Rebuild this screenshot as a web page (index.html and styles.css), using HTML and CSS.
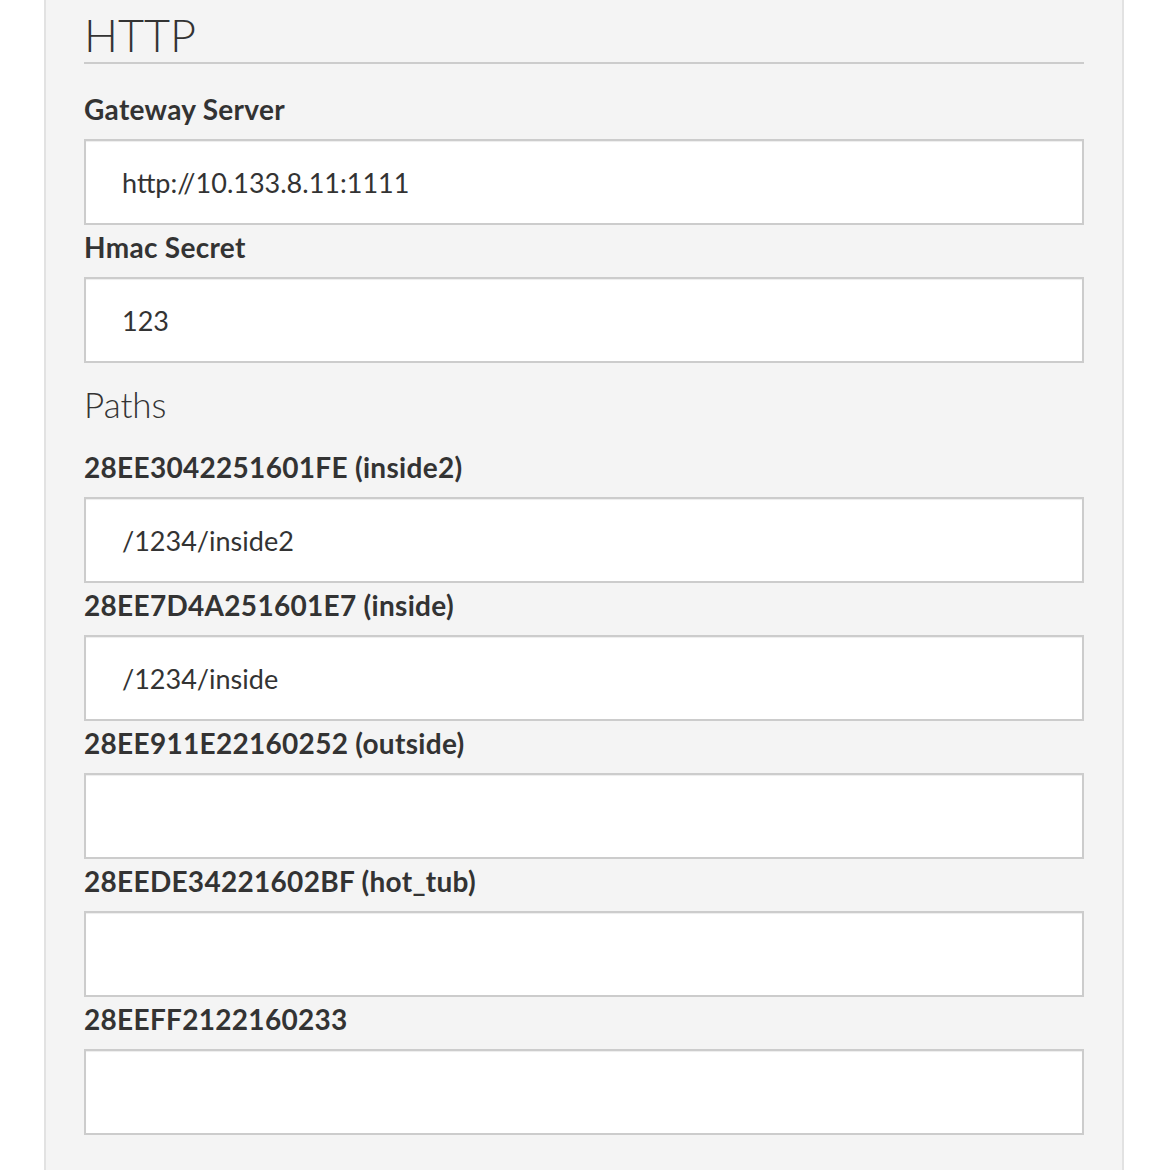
FILE: index.html
```html
<!DOCTYPE html>
<html>
<head>
<meta charset="utf-8">
<link rel="stylesheet" href="styles.css">
</head>
<body>
<div class="panel">
  <h2 class="section-title">HTTP</h2>
  <div class="field">
    <label class="field-label">Gateway Server</label>
    <input class="field-input" type="text" value="http://10.133.8.11:1111">
  </div>
  <div class="field">
    <label class="field-label">Hmac Secret</label>
    <input class="field-input" type="text" value="123">
  </div>
  <h3 class="subsection-title">Paths</h3>
  <div class="field">
    <label class="field-label">28EE3042251601FE (inside2)</label>
    <input class="field-input" type="text" value="/1234/inside2">
  </div>
  <div class="field">
    <label class="field-label">28EE7D4A251601E7 (inside)</label>
    <input class="field-input" type="text" value="/1234/inside">
  </div>
  <div class="field">
    <label class="field-label">28EE911E22160252 (outside)</label>
    <input class="field-input" type="text" value="">
  </div>
  <div class="field">
    <label class="field-label">28EEDE34221602BF (hot_tub)</label>
    <input class="field-input" type="text" value="">
  </div>
  <div class="field">
    <label class="field-label">28EEFF2122160233</label>
    <input class="field-input" type="text" value="">
  </div>
</div>
</body>
</html>
```

FILE: styles.css
```css
html, body {
  margin: 0;
  padding: 0;
  background: #ffffff;
  font-family: "Lato", "Liberation Sans", sans-serif;
  color: #333333;
}

.panel {
  margin-left: 44px;
  width: 1080px;
  box-sizing: border-box;
  background: #f4f4f4;
  border-left: 2px solid #e2e2e2;
  border-right: 2px solid #e2e2e2;
  padding: 8px 38px 40px 38px;
}

.section-title {
  margin: 0;
  font-size: 45px;
  font-weight: 300;
  line-height: 54px;
  border-bottom: 2px solid #cccccc;
  color: #333333;
}

.section-title + .field {
  margin-top: 30px;
}

.field {
  display: flex;
  flex-direction: column;
  margin-bottom: 7px;
}

.field-label {
  display: block;
  font-size: 28px;
  font-weight: 700;
  letter-spacing: 0.3px;
  line-height: 30px;
  margin-bottom: 15px;
  color: #333333;
}

.field-input {
  display: block;
  width: 1000px;
  height: 86px;
  box-sizing: border-box;
  margin: 0;
  border: 2px solid #cccccc;
  border-radius: 0;
  background: #ffffff;
  box-shadow: inset 0 1px 1px rgba(0, 0, 0, 0.075);
  padding: 0 36px;
  font-family: "Lato", "Liberation Sans", sans-serif;
  font-size: 27px;
  color: #333333;
  outline: none;
}

.subsection-title {
  margin: 21px 0 28px 0;
  font-size: 35px;
  font-weight: 300;
  line-height: 40px;
  color: #333333;
}
```
